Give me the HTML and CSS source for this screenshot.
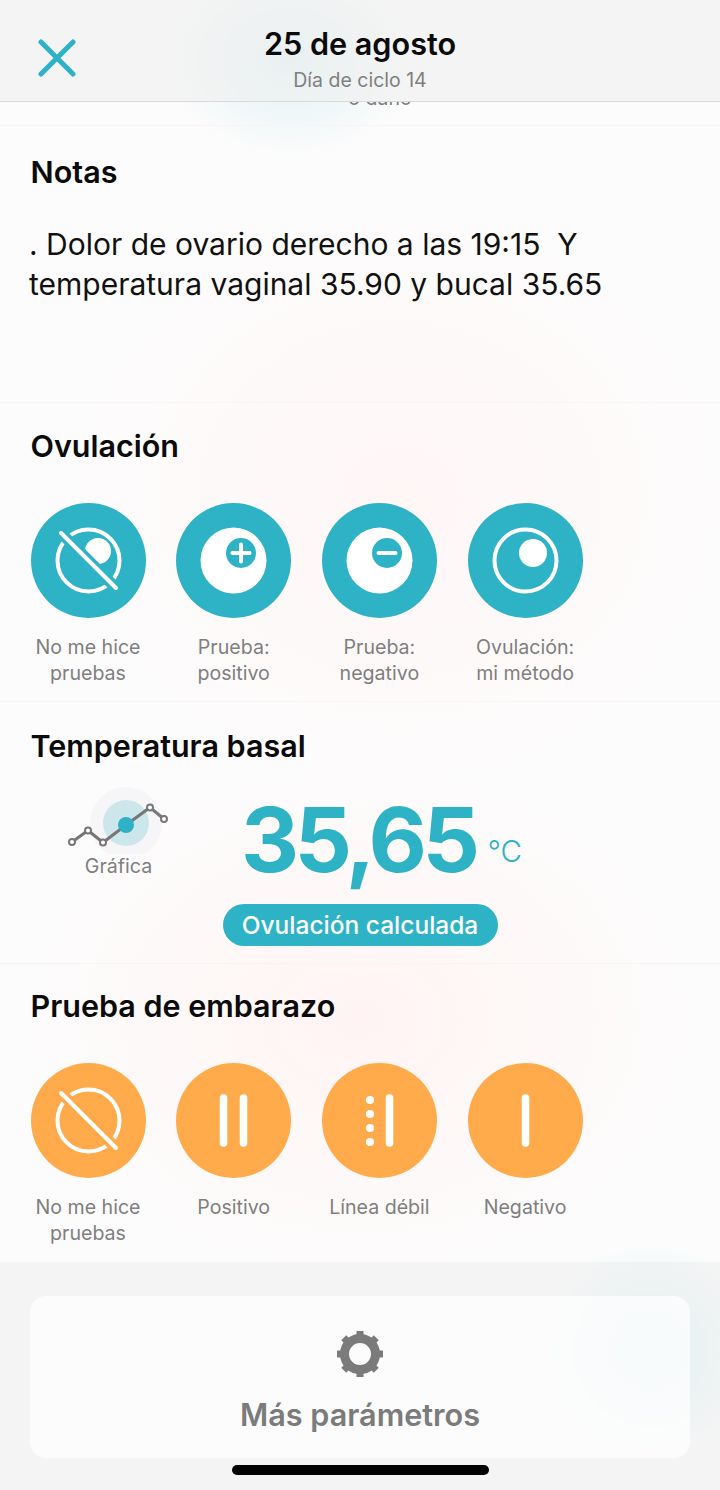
FILE: index.html
```html
<!DOCTYPE html>
<html lang="es">
<head>
    <meta charset="UTF-8">
    <meta name="viewport" content="width=device-width, initial-scale=1.0">
    <title>25 de agosto</title>
    <link rel="stylesheet" href="styles.css">
</head>
<body>
<div class="page">
    <header class="top-bar">
        <svg class="close-icon" width="38" height="38" viewBox="0 0 38 38">
            <path d="M3 3L35 35M35 3L3 35" fill="none" stroke="#2eb2c6" stroke-width="5" stroke-linecap="round"/>
        </svg>
        <h1 class="top-title">25 de agosto</h1>
        <div class="top-sub">Día de ciclo 14</div>
    </header>
    <div class="cut-label"><span>o daño</span></div>

    <section class="section notes">
        <h2 class="section-title">Notas</h2>
        <p class="note-text">. Dolor de ovario derecho a las 19:15&nbsp; Y<br>temperatura vaginal 35.90 y bucal 35.65</p>
    </section>

    <section class="section ovulation">
        <h2 class="section-title">Ovulación</h2>
        <div class="options">
            <div class="option">
                <svg class="round-icon" width="115" height="115" viewBox="0 0 115 115">
                    <circle cx="57.5" cy="57.5" r="57.5" fill="#2eb2c6"/>
                    <circle cx="57.5" cy="57.5" r="31" fill="none" stroke="#fff" stroke-width="4"/>
                    <circle cx="67" cy="48" r="13" fill="#fff"/>
                    <path d="M29 29L86 86" stroke="#2eb2c6" stroke-width="11"/>
                    <path d="M30 30L85 85" stroke="#fff" stroke-width="4" stroke-linecap="round"/>
                </svg>
                <div class="option-label">No me hice<br>pruebas</div>
            </div>
            <div class="option">
                <svg class="round-icon" width="115" height="115" viewBox="0 0 115 115">
                    <circle cx="57.5" cy="57.5" r="57.5" fill="#2eb2c6"/>
                    <circle cx="57.5" cy="57.5" r="33" fill="#fff"/>
                    <circle cx="65" cy="50" r="15" fill="#2eb2c6"/>
                    <path d="M56.5 50H73.5M65 41.5V58.5" stroke="#fff" stroke-width="4" stroke-linecap="round"/>
                </svg>
                <div class="option-label">Prueba:<br>positivo</div>
            </div>
            <div class="option">
                <svg class="round-icon" width="115" height="115" viewBox="0 0 115 115">
                    <circle cx="57.5" cy="57.5" r="57.5" fill="#2eb2c6"/>
                    <circle cx="57.5" cy="57.5" r="33" fill="#fff"/>
                    <circle cx="65" cy="50" r="15" fill="#2eb2c6"/>
                    <path d="M56.5 50H73.5" stroke="#fff" stroke-width="4" stroke-linecap="round"/>
                </svg>
                <div class="option-label">Prueba:<br>negativo</div>
            </div>
            <div class="option">
                <svg class="round-icon" width="115" height="115" viewBox="0 0 115 115">
                    <circle cx="57.5" cy="57.5" r="57.5" fill="#2eb2c6"/>
                    <circle cx="57.5" cy="57.5" r="31" fill="none" stroke="#fff" stroke-width="4"/>
                    <circle cx="65" cy="50" r="14" fill="#fff"/>
                </svg>
                <div class="option-label">Ovulación:<br>mi método</div>
            </div>
        </div>
    </section>

    <section class="section temperature">
        <h2 class="section-title">Temperatura basal</h2>
        <div class="temp-row">
            <div class="chart-link">
                <svg width="120" height="72" viewBox="0 0 120 72">
                    <circle cx="66" cy="41" r="36" fill="#f6f6f8"/>
                    <circle cx="66" cy="41" r="23" fill="#cde6ec"/>
                    <path d="M12 60L28 48.500L43 60.500L66 43L90 25.500L104 37" fill="none" stroke="#777" stroke-width="3"/>
                    <circle cx="12" cy="60" r="3" fill="#fff" stroke="#777" stroke-width="2"/>
                    <circle cx="28" cy="48.500" r="3" fill="#fff" stroke="#777" stroke-width="2"/>
                    <circle cx="43" cy="60.500" r="3" fill="#fff" stroke="#777" stroke-width="2"/>
                    <circle cx="90" cy="25.500" r="3" fill="#fff" stroke="#777" stroke-width="2"/>
                    <circle cx="104" cy="37" r="3" fill="#fff" stroke="#777" stroke-width="2"/>
                    <circle cx="66" cy="43" r="8" fill="#2eb2c6"/>
                </svg>
                <div class="chart-label">Gráfica</div>
            </div>
            <div class="temp-value">35,65</div>
            <div class="temp-unit">°C</div>
        </div>
        <div class="pill-row">
            <div class="pill">Ovulación calculada</div>
        </div>
    </section>

    <section class="section pregnancy">
        <h2 class="section-title">Prueba de embarazo</h2>
        <div class="options">
            <div class="option">
                <svg class="round-icon" width="115" height="115" viewBox="0 0 115 115">
                    <circle cx="57.5" cy="57.5" r="57.5" fill="#ffab4c"/>
                    <circle cx="57.5" cy="57.5" r="31" fill="none" stroke="#fff" stroke-width="4"/>
                    <path d="M29 29L86 86" stroke="#ffab4c" stroke-width="11"/>
                    <path d="M30 30L85 85" stroke="#fff" stroke-width="4" stroke-linecap="round"/>
                </svg>
                <div class="option-label">No me hice<br>pruebas</div>
            </div>
            <div class="option">
                <svg class="round-icon" width="115" height="115" viewBox="0 0 115 115">
                    <circle cx="57.5" cy="57.5" r="57.5" fill="#ffab4c"/>
                    <path d="M47.500 35V80M67.500 35V80" stroke="#fff" stroke-width="7.500" stroke-linecap="round"/>
                </svg>
                <div class="option-label">Positivo</div>
            </div>
            <div class="option">
                <svg class="round-icon" width="115" height="115" viewBox="0 0 115 115">
                    <circle cx="57.5" cy="57.5" r="57.5" fill="#ffab4c"/>
                    <path d="M67.500 35V80" stroke="#fff" stroke-width="7.500" stroke-linecap="round"/>
                    <circle cx="48" cy="37" r="4" fill="#fff"/>
                    <circle cx="48" cy="51" r="4" fill="#fff"/>
                    <circle cx="48" cy="65" r="4" fill="#fff"/>
                    <circle cx="48" cy="79" r="4" fill="#fff"/>
                </svg>
                <div class="option-label">Línea débil</div>
            </div>
            <div class="option">
                <svg class="round-icon" width="115" height="115" viewBox="0 0 115 115">
                    <circle cx="57.5" cy="57.5" r="57.5" fill="#ffab4c"/>
                    <path d="M57.500 35V80" stroke="#fff" stroke-width="7.500" stroke-linecap="round"/>
                </svg>
                <div class="option-label">Negativo</div>
            </div>
        </div>
    </section>

    <footer class="bottom-bar">
        <div class="more-card">
            <svg width="48" height="48" viewBox="0 0 48 48">
                <circle cx="24" cy="24" r="15.500" fill="none" stroke="#7b7b7b" stroke-width="9"/>
                <g fill="#7b7b7b">
                    <rect x="20.500" y="1" width="7" height="6"/>
                    <rect x="20.500" y="1" width="7" height="6" transform="rotate(45 24 24)"/>
                    <rect x="20.500" y="1" width="7" height="6" transform="rotate(90 24 24)"/>
                    <rect x="20.500" y="1" width="7" height="6" transform="rotate(135 24 24)"/>
                    <rect x="20.500" y="1" width="7" height="6" transform="rotate(180 24 24)"/>
                    <rect x="20.500" y="1" width="7" height="6" transform="rotate(225 24 24)"/>
                    <rect x="20.500" y="1" width="7" height="6" transform="rotate(270 24 24)"/>
                    <rect x="20.500" y="1" width="7" height="6" transform="rotate(315 24 24)"/>
                </g>
            </svg>
            <div class="more-label">Más parámetros</div>
        </div>
        <div class="home-bar"></div>
    </footer>
</div>
</body>
</html>
```

FILE: styles.css
```css
* {
    box-sizing: border-box;
}

body {
    margin: 0;
    font-family: "Inter", "Liberation Sans", sans-serif;
    color: #0b0b0b;
}

.page {
    width: 720px;
    height: 1490px;
    overflow: hidden;
    background:
        radial-gradient(ellipse 130px 100px at 290px 60px, rgba(215, 238, 243, 0.8), rgba(215, 238, 243, 0)),
        radial-gradient(ellipse 340px 300px at 400px 500px, #fff6f6, rgba(255, 246, 246, 0)),
        radial-gradient(ellipse 340px 260px at 360px 1020px, #fff4f3, rgba(255, 244, 243, 0)),
        radial-gradient(circle at 650px 1350px, rgba(205, 240, 245, 1), rgba(205, 240, 245, 0) 110px),
        #fdfcfc;
}

.top-bar {
    position: relative;
    height: 102px;
    padding-top: 24px;
    text-align: center;
    background-color: rgba(240, 240, 240, 0.65);
    border-bottom: 1px solid #d8d9d9;
}

.close-icon {
    position: absolute;
    left: 38px;
    top: 39px;
}

.top-title {
    margin: 0;
    font-size: 30.6px;
    line-height: 40px;
    font-weight: 600;
}

.top-sub {
    margin-top: 1px;
    font-size: 19.5px;
    line-height: 30px;
    color: #7f7f7f;
}

.cut-label {
    display: flex;
    align-items: flex-end;
    justify-content: center;
    height: 6px;
    overflow: hidden;
    font-size: 19.5px;
    line-height: 20px;
    color: #7f7f7f;
}

.cut-label span {
    flex: none;
    padding-left: 40px;
}

.section {
    border-top: 1px solid #f9f4f4;
}

.section-title {
    margin: 0;
    padding-left: 30.5px;
    font-size: 30.5px;
    line-height: 36px;
    font-weight: 600;
}

.notes {
    margin-top: 17px;
    padding-top: 28px;
    padding-bottom: 98px;
}

.note-text {
    margin: 34px 0 0;
    padding-left: 29px;
    font-size: 30px;
    line-height: 40px;
    color: #111;
}

.ovulation {
    padding-top: 25px;
    padding-bottom: 15px;
}

.options {
    display: flex;
    gap: 30.7px;
    margin-top: 39px;
    padding-left: 30.5px;
}

.option {
    width: 115px;
}

.round-icon {
    display: block;
}

.option-label {
    margin: 16px -15px 0;
    font-size: 19.6px;
    line-height: 26px;
    text-align: center;
    color: #7f7f7f;
}

.temperature {
    padding-top: 26px;
    padding-bottom: 17px;
}

.temp-row {
    display: flex;
    align-items: flex-start;
    height: 140px;
}

.chart-link {
    width: 120px;
    margin-left: 60px;
    margin-top: 18px;
    text-align: center;
}

.chart-link svg {
    display: block;
}

.chart-label {
    margin-left: -3px;
    margin-top: -1px;
    font-size: 19.6px;
    line-height: 26px;
    color: #7f7f7f;
}

.temp-value {
    margin-left: 61px;
    margin-top: 20px;
    font-size: 90px;
    line-height: 112px;
    font-weight: 700;
    letter-spacing: -4.5px;
    color: #2eb2c6;
}

.temp-unit {
    margin-left: 12px;
    margin-top: 65px;
    font-size: 29.5px;
    line-height: 44px;
    font-weight: 300;
    color: #2eb2c6;
}

.pill-row {
    display: flex;
    justify-content: center;
}

.pill {
    width: 275px;
    height: 42px;
    border-radius: 21px;
    background-color: #2eb2c6;
    color: #fff;
    font-size: 24.5px;
    line-height: 42px;
    font-weight: 500;
    text-align: center;
}

.pregnancy {
    padding-top: 24px;
    height: 299px;
}

.bottom-bar {
    height: 228px;
    padding: 34px 30px 0;
    background-color: rgba(240, 240, 240, 0.65);
}

.more-card {
    display: flex;
    flex-direction: column;
    align-items: center;
    height: 162px;
    padding-top: 34px;
    border-radius: 16px;
    background-color: rgba(255, 255, 255, 0.7);
}

.more-card svg {
    display: block;
}

.more-label {
    margin-top: 17px;
    font-size: 30.6px;
    line-height: 40px;
    font-weight: 600;
    color: #7b7b7b;
}

.home-bar {
    width: 257px;
    height: 10px;
    margin: 7px auto 0;
    border-radius: 5px;
    background-color: #000;
}
```
